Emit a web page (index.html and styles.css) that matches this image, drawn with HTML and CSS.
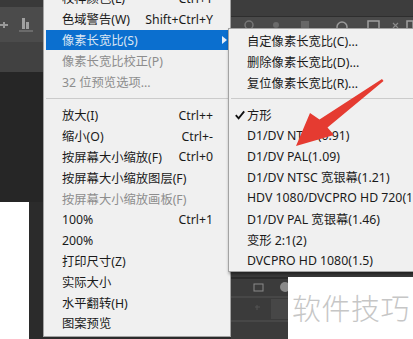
FILE: index.html
```html
<!DOCTYPE html>
<html lang="zh-CN">
<head>
    <meta charset="UTF-8">
    <meta name="viewport" content="width=device-width, initial-scale=1.0">
    <title>像素长宽比</title>
    <link rel="stylesheet" href="styles.css">
</head>
<body>
    <div class="desk">
        <div class="left">
            <div class="titlebar"></div>
            <div class="toolbar">
                <svg class="tool" width="40" height="35" viewBox="0 0 40 35">
                    <path d="M0 25h8M4 22v6" stroke="#9a9a9a" stroke-width="2"/>
                    <rect x="22" y="18" width="3" height="11" fill="#a0a0a0"/>
                    <rect x="26" y="22" width="3" height="7" fill="#a0a0a0"/>
                    <path d="M19 31h14" stroke="#8c8c8c" stroke-width="1"/>
                </svg>
            </div>
            <div class="optbar"></div>
            <div class="workspace">
                <div class="gap"></div>
                <div class="docrow">
                    <div class="doc"></div>
                </div>
            </div>
        </div>
        <div class="right">
            <div class="rtop"></div>
            <div class="ricons">
                <svg width="182" height="11" viewBox="0 0 182 11">
                    <circle cx="18" cy="8" r="4" fill="none" stroke="#777" stroke-width="1.5"/>
                    <circle cx="45" cy="8" r="3" fill="#6a6a6a"/>
                    <rect x="70" y="4" width="8" height="7" fill="#666"/>
                    <circle cx="111" cy="10" r="5" fill="none" stroke="#9a9a9a" stroke-width="1.5"/>
                    <rect x="137" y="4" width="11" height="8" fill="none" stroke="#a0a0a0" stroke-width="1.5"/>
                    <path d="M162 6l5 5M167 6l-5 5" stroke="#8a8a8a" stroke-width="1.2"/>
                    <rect x="176" y="4" width="6" height="8" fill="none" stroke="#a0a0a0" stroke-width="1.5"/>
                </svg>
            </div>
            <div class="rpanel"></div>
            <div class="rbottom">
                <div class="layers">
                    <svg width="57" height="62" viewBox="0 0 57 62">
                        <path d="M0 1h57" stroke="#2a2a2a" stroke-width="2"/>
                        <rect x="23" y="7" width="9" height="7" fill="none" stroke="#8a8a8a"/>
                        <circle cx="54" cy="10" r="5" fill="#8a8a8a"/>
                        <path d="M0 20h57M0 44h57" stroke="#555" stroke-width="1"/>
                        <path d="M24 30h5M26 28v5" stroke="#555" stroke-width="1"/>
                        <rect x="40" y="22" width="17" height="20" fill="#474747"/>
                    </svg>
                </div>
                <div class="watermark">软件技巧</div>
            </div>
        </div>
    </div>

    <ul class="menu main">
        <li class="item"><span>校样颜色(L)</span><span class="key">Ctrl+Y</span></li>
        <li class="item"><span>色域警告(W)</span><span class="key">Shift+Ctrl+Y</span></li>
        <li class="item active"><span>像素长宽比(S)</span><span class="more"></span></li>
        <li class="item off"><span>像素长宽比校正(P)</span></li>
        <li class="item off"><span>32 位预览选项...</span></li>
        <li class="sep"></li>
        <li class="item"><span>放大(I)</span><span class="key">Ctrl++</span></li>
        <li class="item"><span>缩小(O)</span><span class="key">Ctrl+-</span></li>
        <li class="item"><span>按屏幕大小缩放(F)</span><span class="key">Ctrl+0</span></li>
        <li class="item"><span>按屏幕大小缩放图层(F)</span></li>
        <li class="item off"><span>按屏幕大小缩放画板(F)</span></li>
        <li class="item"><span>100%</span><span class="key">Ctrl+1</span></li>
        <li class="item"><span>200%</span></li>
        <li class="item"><span>打印尺寸(Z)</span></li>
        <li class="item"><span>实际大小</span></li>
        <li class="item"><span>水平翻转(H)</span></li>
        <li class="item"><span>图案预览</span></li>
    </ul>

    <ul class="menu sub">
        <li class="item"><span class="mark"></span><span>自定像素长宽比(C)...</span></li>
        <li class="item"><span class="mark"></span><span>删除像素长宽比(D)...</span></li>
        <li class="item"><span class="mark"></span><span>复位像素长宽比(R)...</span></li>
        <li class="sep"></li>
        <li class="item">
            <span class="mark">
                <svg width="10" height="10" viewBox="0 0 10 10">
                    <path d="M0.8 5.2L3.6 8.4L9.2 1.4" fill="none" stroke="#111" stroke-width="1.8"/>
                </svg>
            </span><span>方形</span>
        </li>
        <li class="item"><span class="mark"></span><span>D1/DV NTSC(0.91)</span></li>
        <li class="item"><span class="mark"></span><span>D1/DV PAL(1.09)</span></li>
        <li class="item"><span class="mark"></span><span>D1/DV NTSC 宽银幕(1.21)</span></li>
        <li class="item"><span class="mark"></span><span>HDV 1080/DVCPRO HD 720(1.33)</span></li>
        <li class="item"><span class="mark"></span><span>D1/DV PAL 宽银幕(1.46)</span></li>
        <li class="item"><span class="mark"></span><span>变形 2:1(2)</span></li>
        <li class="item"><span class="mark"></span><span>DVCPRO HD 1080(1.5)</span></li>
    </ul>

    <svg class="pointer" width="413" height="339" viewBox="0 0 413 339">
        <polygon points="296,146 310,113 319.5,119.5 382,79 383.5,81 327.5,127.5 334,135" fill="#e53b31"/>
    </svg>
</body>
</html>
```

FILE: styles.css
```css
* {
    box-sizing: border-box;
}
html, body {
    margin: 0;
    padding: 0;
}
body {
    width: 413px;
    height: 339px;
    overflow: hidden;
    position: relative;
    background-color: #282828;
    font-family: "Noto Sans", "Noto Sans CJK SC", sans-serif;
    font-size: 12.3px;
}
.desk {
    display: flex;
    height: 339px;
}
.left {
    width: 231px;
    display: flex;
    flex-direction: column;
}
.titlebar {
    height: 7px;
    background-color: #393939;
}
.toolbar {
    height: 35px;
    background-color: #4b4b4b;
}
.tool {
    display: block;
    margin-top: -7px;
}
.optbar {
    height: 30px;
    background-color: #414141;
}
.workspace {
    flex: 1;
    display: flex;
    flex-direction: column;
    background-color: #262626;
}
.gap {
    flex: 1;
}
.docrow {
    height: 137px;
    display: flex;
    background-color: #2b2b2b;
}
.doc {
    width: 29px;
    background-color: #ffffff;
}
.right {
    flex: 1;
    display: flex;
    flex-direction: column;
}
.rtop {
    height: 17px;
    background-color: #3d3d3d;
    border-bottom: 1px solid #2e2e2e;
}
.ricons {
    height: 11px;
    background-color: #4a4a4a;
}
.ricons svg {
    display: block;
}
.rpanel {
    flex: 1;
    background-color: #3a3a3a;
}
.rbottom {
    height: 62px;
    display: flex;
}
.layers {
    width: 57px;
    background-color: #3b3b3b;
}
.layers svg {
    display: block;
}
.watermark {
    flex: 1;
    background-color: #ffffff;
    color: #c6c6c6;
    font-family: "Noto Sans CJK SC", sans-serif;
    font-size: 29px;
    font-weight: 300;
    line-height: 60px;
    padding-left: 4px;
    letter-spacing: 0.5px;
}

/* menus */
.menu {
    position: absolute;
    list-style: none;
    margin: 0;
    background-color: #f0f0f0;
    border: 1px solid #a3a3a3;
    color: #1a1a1a;
}
.main {
    left: 43px;
    top: -15px;
    width: 188px;
    padding: 2px 0;
}
.sub {
    left: 228px;
    top: 28px;
    width: 200px;
    padding: 2px 0 0;
    box-shadow: 1px 2px 3px rgba(0, 0, 0, 0.45);
}
.item {
    position: relative;
    display: flex;
    align-items: center;
    justify-content: space-between;
    height: 20.8px;
    margin: 0 2px;
    padding: 0 15px 0 16px;
    white-space: nowrap;
}
.sub .item {
    justify-content: flex-start;
    padding: 0;
}
.mark {
    flex-shrink: 0;
    width: 16px;
    padding-left: 4px;
    display: flex;
    align-items: center;
}
.key {
    color: #1a1a1a;
}
.off {
    color: #8d8d8d;
}
.active {
    background-color: #0b6fcf;
    color: #dbe6f3;
}
.more {
    position: absolute;
    right: 1px;
    top: 6px;
    border-left: 5px solid #e6eef8;
    border-top: 4.5px solid transparent;
    border-bottom: 4.5px solid transparent;
}
.sep {
    height: 1px;
    margin: 6px 2px;
    background-color: #cbcbcb;
}
.sub .sep {
    margin: 5px 2px;
}
.pointer {
    position: absolute;
    left: 0;
    top: 0;
}
```
